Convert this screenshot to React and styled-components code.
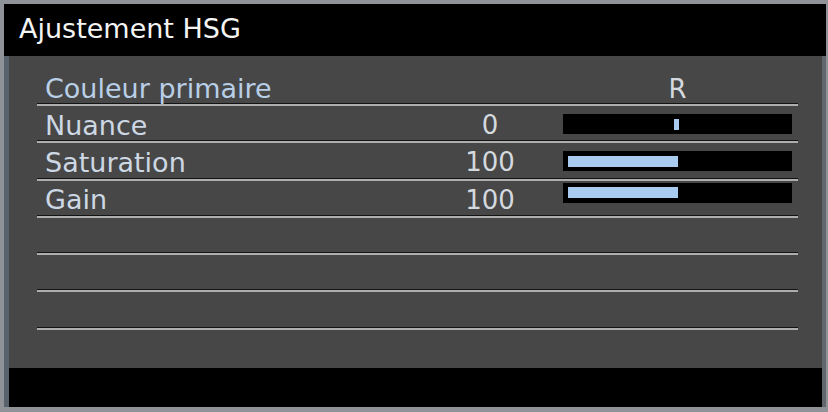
import React from "react";
import styled, { createGlobalStyle } from "styled-components";

const Global = createGlobalStyle`
  html, body { margin: 0; padding: 0; background: #8f9398; }
  * { box-sizing: border-box; }
`;

const Frame = styled.div`
  width: 828px;
  height: 412px;
  padding: 4px 2px 5px 4px;
  background: #8f9398;
  display: flex;
  flex-direction: column;
  font-family: "DejaVu Sans", Verdana, sans-serif;
`;

const Header = styled.div`
  height: 52px;
  background: #000;
  color: #f4f4f4;
  font-size: 27px;
  display: flex;
  align-items: center;
  padding-left: 15px;
  padding-bottom: 4px;
`;

const Body = styled.div`
  flex: 1;
  display: flex;
`;

const Strip = styled.div`
  width: ${(p) => p.$w}px;
  background: ${(p) => p.$c};
`;

const Main = styled.div`
  flex: 1;
  display: flex;
  flex-direction: column;
  background: #474747;
`;

const List = styled.div`
  flex: 1;
  padding: 14px 24px 0 28px;
`;

const Row = styled.div`
  height: ${(p) => p.$h}px;
  display: grid;
  grid-template-columns: 406px 120px 229px;
  align-items: center;
  padding-top: 3px;
  border-bottom: 2px solid #aeaeae;
  box-shadow: inset 0 -1px 0 #141414;
  color: #ccd8e6;
  font-size: 27px;
  line-height: 1;
`;

const Label = styled.div`
  padding-left: 8px;
  color: ${(p) => (p.$head ? "#b9cfe8" : "#cdd8e4")};
`;

const Value = styled.div`
  text-align: center;
  padding-right: 26px;
  font-size: 26px;
  color: #d4d9df;
`;

const Head = styled.div`
  text-align: center;
  font-size: 26px;
  color: #d4d9df;
`;

const Bar = styled.div`
  height: 20px;
  background: #000;
  display: flex;
  align-items: center;
  padding: 0 5px;
  align-self: ${(p) => (p.$raised ? "start" : "center")};
  margin-top: ${(p) => (p.$raised ? "-1px" : "-2px")};
`;

const Fill = styled.div`
  height: 11px;
  background: #a9cbef;
  margin-left: ${(p) => p.$start}px;
  width: ${(p) => p.$width}px;
`;

const Footer = styled.div`
  height: 39px;
  background: #000;
`;

const rows = [
  { label: "Nuance", value: "0", start: 106, width: 5 },
  { label: "Saturation", value: "100", start: 0, width: 110 },
  { label: "Gain", value: "100", start: 0, width: 110, raised: true },
];

export default function App() {
  return (
    <>
      <Global />
      <Frame>
        <Header>Ajustement HSG</Header>
        <Body>
          <Strip $w={5} $c="#57626d" />
          <Main>
            <List>
              <Row $h={36}>
                <Label $head>Couleur primaire</Label>
                <div />
                <Head>R</Head>
              </Row>
              {rows.map((r) => (
                <Row key={r.label} $h={37.3}>
                  <Label>{r.label}</Label>
                  <Value>{r.value}</Value>
                  <Bar $raised={r.raised}>
                    <Fill $start={r.start} $width={r.width} />
                  </Bar>
                </Row>
              ))}
              <Row $h={37.3} />
              <Row $h={37.3} />
              <Row $h={37.3} />
            </List>
            <Footer />
          </Main>
          <Strip $w={4} $c="#62666d" />
        </Body>
      </Frame>
    </>
  );
}
